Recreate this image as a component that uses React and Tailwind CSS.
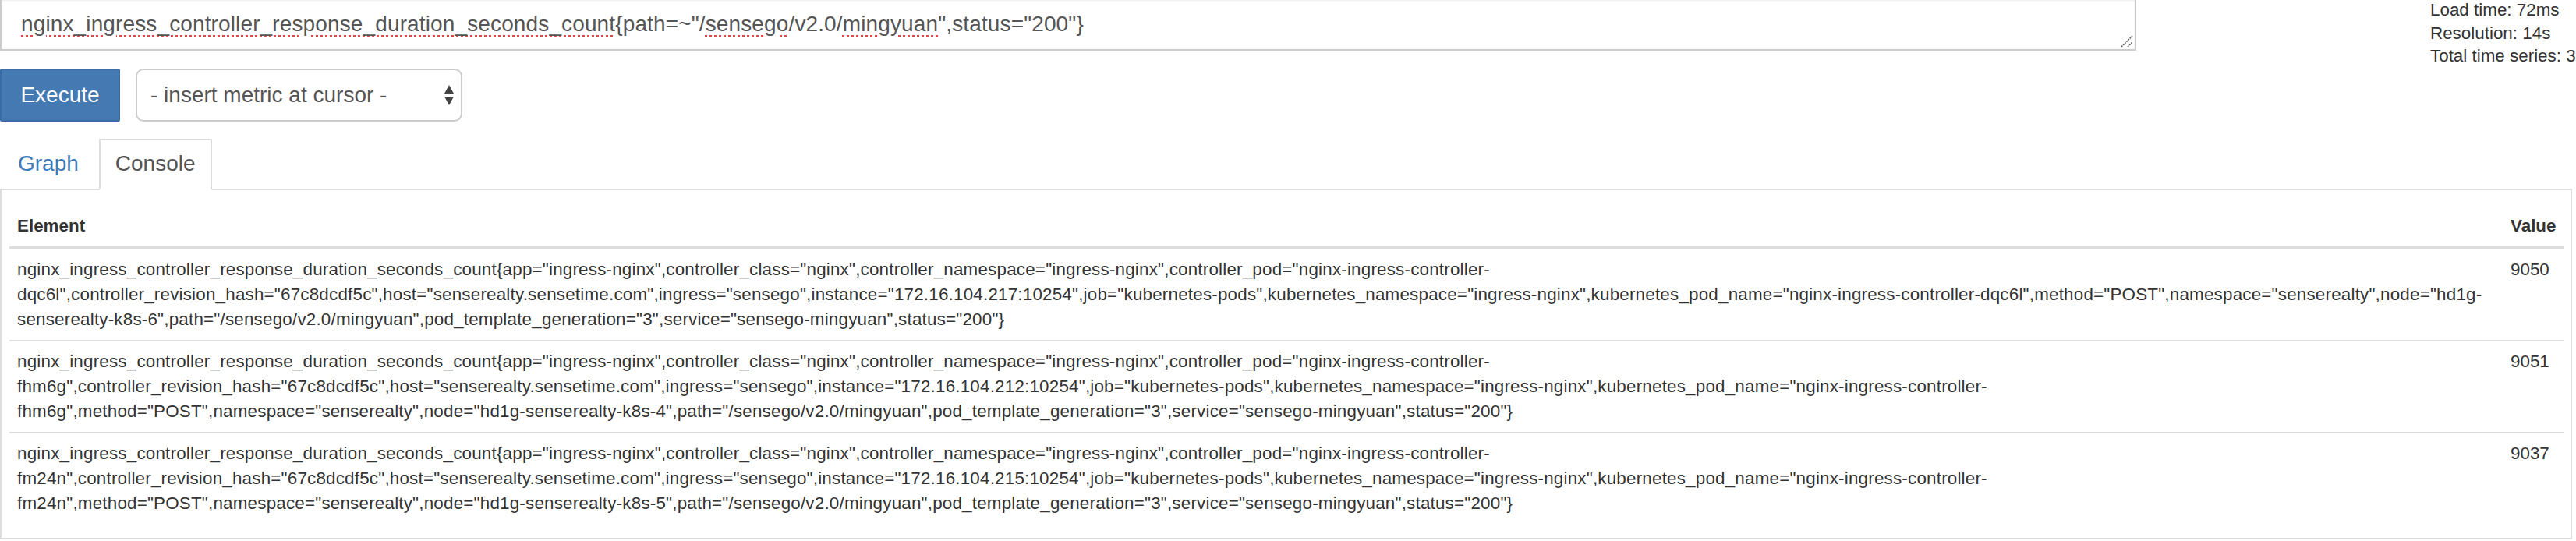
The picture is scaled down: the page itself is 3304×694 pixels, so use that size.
import React from 'react'

const head =
  'nginx_ingress_controller_response_duration_seconds_count{app="ingress-nginx",controller_class="nginx",controller_namespace="ingress-nginx",controller_pod="nginx-ingress-controller-'

const rows = [
  {
    value: '9050',
    lines: [
      head,
      'dqc6l",controller_revision_hash="67c8dcdf5c",host="senserealty.sensetime.com",ingress="sensego",instance="172.16.104.217:10254",job="kubernetes-pods",kubernetes_namespace="ingress-nginx",kubernetes_pod_name="nginx-ingress-controller-dqc6l",method="POST",namespace="senserealty",node="hd1g-',
      'senserealty-k8s-6",path="/sensego/v2.0/mingyuan",pod_template_generation="3",service="sensego-mingyuan",status="200"}',
    ],
  },
  {
    value: '9051',
    lines: [
      head,
      'fhm6g",controller_revision_hash="67c8dcdf5c",host="senserealty.sensetime.com",ingress="sensego",instance="172.16.104.212:10254",job="kubernetes-pods",kubernetes_namespace="ingress-nginx",kubernetes_pod_name="nginx-ingress-controller-',
      'fhm6g",method="POST",namespace="senserealty",node="hd1g-senserealty-k8s-4",path="/sensego/v2.0/mingyuan",pod_template_generation="3",service="sensego-mingyuan",status="200"}',
    ],
  },
  {
    value: '9037',
    lines: [
      head,
      'fm24n",controller_revision_hash="67c8dcdf5c",host="senserealty.sensetime.com",ingress="sensego",instance="172.16.104.215:10254",job="kubernetes-pods",kubernetes_namespace="ingress-nginx",kubernetes_pod_name="nginx-ingress-controller-',
      'fm24n",method="POST",namespace="senserealty",node="hd1g-senserealty-k8s-5",path="/sensego/v2.0/mingyuan",pod_template_generation="3",service="sensego-mingyuan",status="200"}',
    ],
  },
]

// spell-check squiggle the browser draws under unknown words
function Typo({ children }) {
  return (
    <span className="underline decoration-dotted decoration-[#e4473e] decoration-[3px] underline-offset-[5px]">
      {children}
    </span>
  )
}

function QueryBox() {
  return (
    <div className="relative -mt-[3px] h-[68px] w-[2740px] shrink-0 border-2 border-[#ccc] bg-white px-[25px] pt-[12px] text-[28px] leading-[40px] tracking-[0.13px] text-[#555] shadow-[inset_0_2px_2px_rgba(0,0,0,0.075)] whitespace-nowrap">
      <Typo>nginx_ingress_controller_response_duration_seconds_count</Typo>
      {'{path=~"/'}
      <Typo>sensego</Typo>
      {'/v2.0/'}
      <Typo>mingyuan</Typo>
      {'",status="200"}'}
      <svg className="absolute right-[1px] bottom-[1px]" width="18" height="18" viewBox="0 0 18 18">
        <path d="M2 16 L16 2 M10 16 L16 10" stroke="#666" strokeWidth="1.6" strokeDasharray="2 1" fill="none" />
      </svg>
    </div>
  )
}

function MetricSelect() {
  return (
    <div className="flex h-[68px] w-[419px] items-center justify-between rounded-[10px] border-2 border-[#ccc] bg-white pl-[17px] pr-[8px] text-[28px] text-[#555]">
      <span>- insert metric at cursor -</span>
      <svg width="14" height="26" viewBox="0 0 14 26">
        <path d="M7 0 L13 11 L1 11 Z M1 15 L13 15 L7 26 Z" fill="#444" />
      </svg>
    </div>
  )
}

export default function App() {
  return (
    <div className="w-[3304px] h-[694px] overflow-hidden bg-white font-['Liberation_Sans',Arial,sans-serif] text-[#333]">
      <div className="flex h-[65px]">
        <QueryBox />
        <div className="ml-[377px] -mt-[2px] whitespace-nowrap text-[22.4px] leading-[29.5px]">
          <div>Load time: 72ms</div>
          <div>Resolution: 14s</div>
          <div>Total time series: 3</div>
        </div>
      </div>

      <div className="mt-[23px] flex gap-[20px]">
        <button className="h-[68px] w-[154px] rounded-[2px] border-2 border-[#3a6ca3] bg-[#4479b2] text-[28px] text-white">
          Execute
        </button>
        <MetricSelect />
      </div>

      <div className="mt-[22px] flex w-[3299px] gap-[4px] border-b-2 border-[#ddd] text-[28px] leading-[40px]">
        <div className="ml-[1px] border-2 border-transparent px-[20px] py-[10px] text-[#3d7ab8]">Graph</div>
        <div className="-mb-[2px] border-2 border-[#ddd] border-b-white bg-white px-[19px] py-[10px] text-[#555]">
          Console
        </div>
      </div>

      <div className="w-[3299px] border-2 border-t-0 border-[#ddd] pt-[20px] pb-[18px] pl-[10px] pr-[9px]">
        <table className="w-[3276px] table-fixed border-collapse text-[22.4px] leading-[32px]">
          <colgroup>
            <col className="w-[3198px]" />
            <col className="w-[78px]" />
          </colgroup>
          <thead>
            <tr className="border-b-4 border-[#ddd]">
              <th className="p-[10px] text-left font-bold">Element</th>
              <th className="p-[10px] text-left font-bold">Value</th>
            </tr>
          </thead>
          <tbody>
            {rows.map((row, i) => (
              <tr key={row.value} className={i > 0 ? 'border-t-2 border-[#ddd]' : ''}>
                <td className="p-[10px] align-top">
                  {row.lines.map((line, j) => (
                    <div key={j} className="whitespace-nowrap tracking-[0.2px]">
                      {line}
                    </div>
                  ))}
                </td>
                <td className="p-[10px] align-top">{row.value}</td>
              </tr>
            ))}
          </tbody>
        </table>
      </div>
    </div>
  )
}
